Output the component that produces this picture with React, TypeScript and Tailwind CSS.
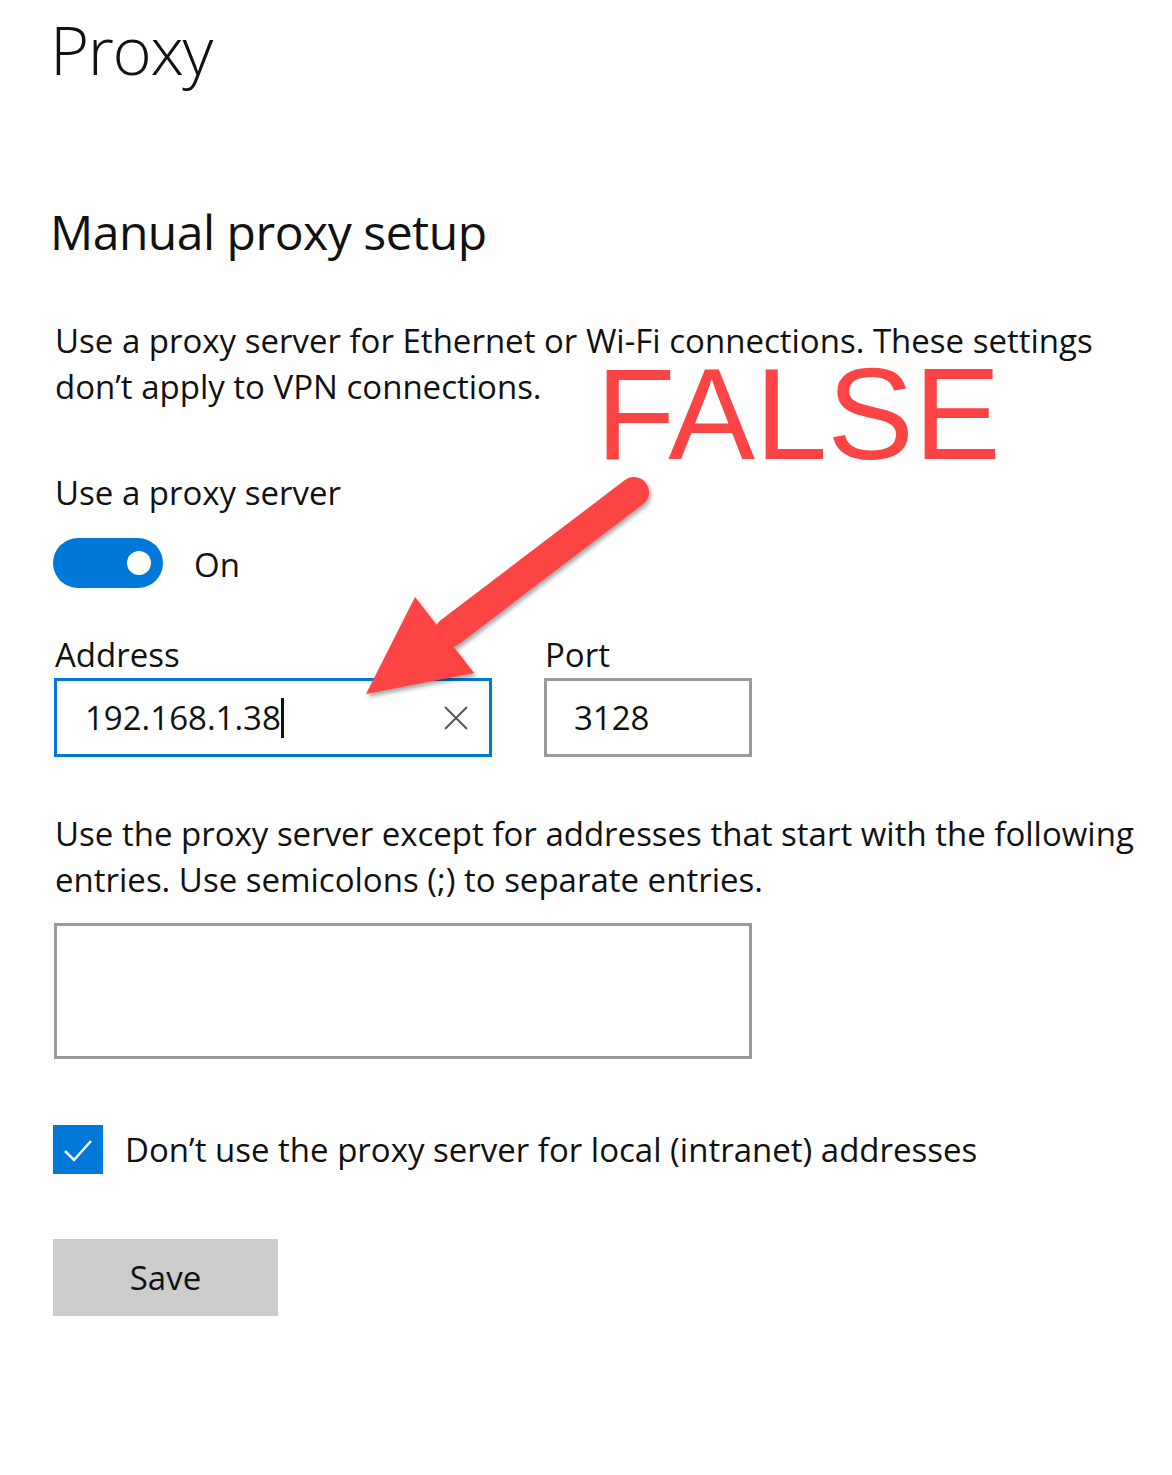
import React from 'react';

const ui = "font-['Open_Sans',sans-serif] text-[#111]";

function Toggle() {
  return (
    <div className="flex h-[50px] w-[110px] items-center justify-end rounded-full bg-[#0078d7] pr-[12px]">
      <div className="h-[24px] w-[24px] rounded-full bg-white" />
    </div>
  );
}

function ClearIcon() {
  return (
    <svg width="26" height="26" viewBox="0 0 26 26" className="shrink-0">
      <path d="M2 2 L24 24 M24 2 L2 24" stroke="#555" strokeWidth="2" fill="none" />
    </svg>
  );
}

function Annotation() {
  return (
    <>
      <div className="pointer-events-none absolute left-[596px] top-[339px] font-['Liberation_Sans',Arial,sans-serif] text-[130px] leading-[150px] text-[#fc4445]">
        FALSE
      </div>
      <svg
        className="pointer-events-none absolute left-0 top-0 drop-shadow-[2px_3px_2px_rgba(0,0,0,0.35)]"
        width="1172"
        height="1475"
        viewBox="0 0 1172 1475"
      >
        <line x1="634" y1="492" x2="450" y2="632" stroke="#fc4445" strokeWidth="30" strokeLinecap="round" />
        <polygon points="415,597 474,673 366,694" fill="#fc4445" />
      </svg>
    </>
  );
}

export default function App() {
  return (
    <div className={`relative h-[1475px] w-[1172px] overflow-hidden bg-white pl-[50px] ${ui}`}>
      <h1 className="mt-[14px] text-[67px] font-light leading-[70px] tracking-[-0.02em]">Proxy</h1>

      <h2 className="mt-[123px] text-[48px] font-normal leading-[49px] tracking-[-0.01em]">Manual proxy setup</h2>

      <div className="whitespace-nowrap pl-[5px] text-[33px] leading-[46px]">
        <p className="mt-[62px]">
          Use a proxy server for Ethernet or Wi-Fi connections. These settings
          <br />
          don’t apply to VPN connections.
        </p>

        <p className="mt-[60px]">Use a proxy server</p>

        <div className="mt-[22px] flex items-center gap-[31px] -ml-[2px]">
          <Toggle />
          <span className="translate-y-[2px]">On</span>
        </div>

        <div className="mt-[44px] flex gap-[52px] -ml-[1px]">
          <label className="flex flex-col">
            <span className="pl-[1px]">Address</span>
            <div className="flex h-[79px] w-[438px] items-center border-[3px] border-[#0078d7] pl-[28px] pr-[20px]">
              <span className="flex flex-1 items-center">
                <span>192.168.1.38</span>
                <span className="h-[40px] w-[3px] bg-[#111]" />
              </span>
              <ClearIcon />
            </div>
          </label>
          <label className="flex flex-col">
            <span className="pl-[1px]">Port</span>
            <div className="flex h-[79px] w-[208px] items-center border-[3px] border-[#999] pl-[27px]">3128</div>
          </label>
        </div>

        <p className="mt-[54px]">
          Use the proxy server except for addresses that start with the following
          <br />
          entries. Use semicolons (;) to separate entries.
        </p>

        <div className="mt-[20px] -ml-[1px] h-[136px] w-[698px] border-[3px] border-[#999]" />

        <div className="mt-[66px] flex items-center gap-[22px] -ml-[2px]">
          <div className="flex h-[49px] w-[50px] items-center justify-center bg-[#0078d7]">
            <svg width="34" height="34" viewBox="0 0 34 34">
              <path d="M4 18 L13 27 L30 8" stroke="white" strokeWidth="2.5" fill="none" />
            </svg>
          </div>
          <span>Don’t use the proxy server for local (intranet) addresses</span>
        </div>

        <button className="mt-[65px] -ml-[2px] flex h-[77px] w-[225px] items-center justify-center bg-[#cccccc] text-[33px]">
          Save
        </button>
      </div>

      <Annotation />
    </div>
  );
}
